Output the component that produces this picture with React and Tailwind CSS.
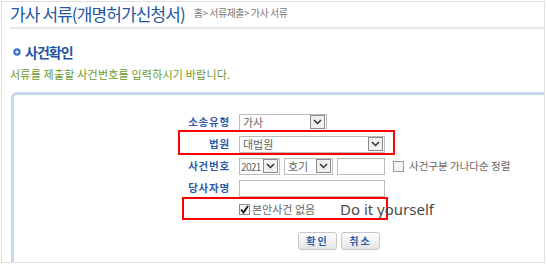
import React from 'react';

const Chevron = () => (
  <svg width="9" height="6" viewBox="0 0 9 6" fill="none">
    <polyline points="1,1 4.5,4.5 8,1" stroke="#333" strokeWidth="1.5" />
  </svg>
);

const Select = ({ className, value, textClass = 'pl-[3px] text-[11px]' }) => (
  <div className={`flex items-center h-[17px] border border-[#bcbcbc] bg-white ${className}`}>
    <span className={`flex-1 leading-[15px] text-[#666] whitespace-nowrap ${textClass}`}>{value}</span>
    <span className="shrink-0 w-[15px] h-[14px] mr-[1px] border border-[#8c8c8c] bg-[#f0f0f0] flex items-center justify-center">
      <Chevron />
    </span>
  </div>
);

const Label = ({ children }) => (
  <div className="w-[61px] mr-[9px] text-right text-[10.5px] font-bold tracking-[0.8px] text-[#2b5ca8] leading-none whitespace-nowrap">
    {children}
  </div>
);

const Button = ({ children }) => (
  <button
    type="button"
    className="w-[39px] h-[18px] rounded-[3px] border border-[#c6c6c6] bg-gradient-to-b from-white to-[#e4e4e4] text-[10px] font-bold tracking-[2px] text-[#2b5ca8] leading-none"
  >
    {children}
  </button>
);

export default function App() {
  return (
    <div className="w-[546px] h-[264px] bg-white overflow-hidden font-['Noto_Sans_CJK_KR',sans-serif]">
      <div className="mt-[1px] ml-[1px] w-[544px] h-[262px] border border-[#e0e0e0] flex flex-col">
        {/* page title */}
        <div className="h-[22px] pl-[8px] flex items-center">
          <h1 className="text-[17px] tracking-[-0.9px] text-[#2456a4] leading-none whitespace-nowrap">가사 서류(개명허가신청서)</h1>
          <span className="ml-[9px] text-[10px] tracking-[-0.5px] text-[#7a7a7a] leading-none whitespace-nowrap">홈&gt; 서류제출&gt; 가사 서류</span>
        </div>
        <div className="mt-[3px] ml-[8px] h-[2px] bg-[#e6e6e6]" />

        {/* section heading */}
        <div className="mt-[15px] h-[16px] pl-[11px] flex items-center">
          <svg width="8" height="8" viewBox="0 0 8 8">
            <circle cx="4" cy="4" r="3.7" fill="#3f71c2" />
            <circle cx="4" cy="4" r="1.6" fill="#dfe9f7" />
          </svg>
          <h2 className="ml-[4px] text-[14px] font-bold tracking-[-1px] text-[#2456a4] leading-none">사건확인</h2>
        </div>
        <p className="mt-[7px] h-[14px] pl-[8px] flex items-center text-[11px] tracking-[0.2px] text-[#6b9a28] leading-none whitespace-nowrap">
          서류를 제출할 사건번호를 입력하시기 바랍니다.
        </p>

        {/* form panel */}
        <div className="mt-[11px] ml-[9px] flex-1 border-l-[3px] border-t-[3px] border-[#c6d9ea] rounded-tl-[6px] pt-[16px] pl-[155px]">
          <div className="flex items-center h-[22px]">
            <Label>소송유형</Label>
            <Select className="w-[88px]" value="가사" />
          </div>

          <div className="relative flex items-center h-[22px]">
            <Label>법원</Label>
            <Select className="w-[146px]" value="대법원" />
            <div className="absolute left-[9px] top-[-3px] w-[217px] h-[25px] border-2 border-[#f00]" />
          </div>

          <div className="flex items-center h-[22px]">
            <Label>사건번호</Label>
            <Select className="w-[41px]" value="2021" textClass="pl-[1px] text-[10px] tracking-[-0.6px]" />
            <Select className="ml-[4px] w-[49px]" value="호기" />
            <div className="ml-[4px] w-[48px] h-[17px] border border-[#bcbcbc] bg-white" />
            <span className="ml-[8px] w-[11px] h-[11px] border border-[#9a9a9a] bg-[#f4f4f4]" />
            <span className="ml-[5px] text-[10.5px] text-[#666] leading-[14px] whitespace-nowrap">사건구분 가나다순 정렬</span>
          </div>

          <div className="flex items-center h-[22px]">
            <Label>당사자명</Label>
            <div className="w-[146px] h-[17px] border border-[#bcbcbc] bg-white" />
          </div>

          <div className="relative flex items-center h-[20px]">
            <Label />
            <span className="w-[11px] h-[11px] border border-[#8c8c8c] bg-[#f4f4f4] flex items-center justify-center">
              <svg width="9" height="9" viewBox="0 0 9 9" fill="none">
                <polyline points="1,4.5 3.5,7.5 8,1" stroke="#111" strokeWidth="1.8" />
              </svg>
            </span>
            <span className="ml-[2px] text-[11px] text-[#666] leading-[14px] whitespace-nowrap">본안사건 없음</span>
            <div className="absolute left-[13px] top-[-2px] w-[206px] h-[23px] border-2 border-[#f00]" />
            <span className="absolute left-[171px] top-0 text-[15px] leading-[20px] text-[#4a4a4a] font-['Noto_Sans',sans-serif] whitespace-nowrap">
              Do it yourself
            </span>
          </div>

          <div className="mt-[13px] pl-[129px] flex gap-[4px]">
            <Button>확인</Button>
            <Button>취소</Button>
          </div>
        </div>
      </div>
    </div>
  );
}
